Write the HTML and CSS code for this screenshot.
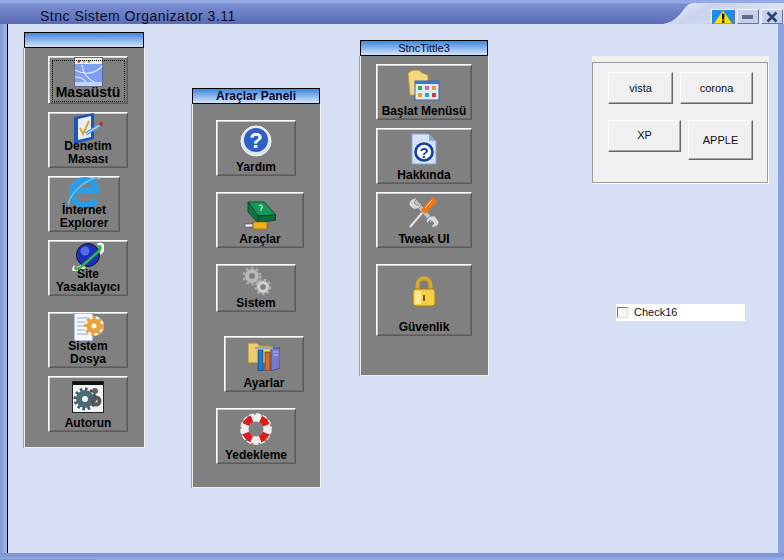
FILE: index.html
```html
<!doctype HTML>
<html>

<head>
  <title>Stnc Sistem Organizator 3.11</title>
  <link rel="stylesheet" href="styles.css">
</head>

<body>
  <div class="form">
    <div class="titlebar">
      <svg class="curve" width="124" height="24" viewBox="0 0 124 24">
        <defs>
          <linearGradient id="curveFill" x1="0" y1="0" x2="1" y2="0.3">
            <stop offset="0" stop-color="#eef1f8" />
            <stop offset="0.4" stop-color="#c9d3ec" />
            <stop offset="1" stop-color="#dbe2f3" />
          </linearGradient>
        </defs>
        <path d="M3 24C14 22 20 15 24 9C27 5 30 3 34 3H124V24Z" fill="url(#curveFill)" />
      </svg>
      <span class="title">Stnc Sistem Organizator 3.11</span>
      <div class="winbtns">
        <div class="winbtn warn">
          <svg width="20" height="14" viewBox="0 0 20 14">
            <path d="M10 0.5L19 13.5H1Z" fill="#ffe600" stroke="#c9a400" stroke-width="0.6" />
            <rect x="9" y="3.5" width="2.4" height="6" fill="#111" />
            <rect x="9" y="10.5" width="2.4" height="2.2" fill="#111" />
          </svg>
        </div>
        <div class="winbtn">
          <svg width="14" height="6" viewBox="0 0 14 6">
            <rect x="1" y="1" width="11" height="4" fill="#5f6c8e" />
          </svg>
        </div>
        <div class="winbtn">
          <svg width="12" height="12" viewBox="0 0 12 12">
            <path d="M1.5 1.5L10.5 10.5M10.5 1.5L1.5 10.5" stroke="#24466e" stroke-width="2.6" />
          </svg>
        </div>
      </div>
    </div>

    <div class="middle">
      <div class="desk">

        <section class="panel panel-one">
          <h2 class="panel-head"></h2>
          <div class="panel-body">
            <button class="tool stack w80 h48 focused">
              <svg class="ico" width="32" height="30" viewBox="0 0 32 30">
                <rect x="2.5" y="0.5" width="28" height="29" fill="#7f9ff2" stroke="#5c6a8c" />
                <rect x="3" y="1" width="27" height="6" fill="#ecebe4" />
                <circle cx="7" cy="4.5" r="1.4" fill="#d23a2c" />
                <circle cx="12" cy="4.5" r="1.4" fill="#d9a32a" />
                <circle cx="17" cy="4.5" r="1.4" fill="#5aa83a" />
                <rect x="3" y="25" width="27" height="4" fill="#c4d3f8" />
                <path d="M3 13C14 19 24 16 30 9M10 8C11 16 16 22 22 25M3 20C8 20 12 22 14 25" fill="none" stroke="#dfe8ff" stroke-width="1.2" />
              </svg>
              <span class="lbl big">Masaüstü</span>
            </button>
            <button class="tool stack w80 h56">
              <svg class="ico" width="32" height="32" viewBox="0 0 32 32">
                <path d="M2 4L22 0V26L2 31Z" fill="#1c54b8" />
                <path d="M6 6L19 3V24L6 27Z" fill="#e8eefb" />
                <path d="M8 15L11 21L17 8" fill="none" stroke="#e0a820" stroke-width="2" />
                <path d="M14 21L28 12" stroke="#5f9be0" stroke-width="3.4" />
                <path d="M14 21L28 12" stroke="#dce9fb" stroke-width="1" />
                <circle cx="29" cy="11" r="2" fill="#c8301e" />
              </svg>
              <span class="lbl">Denetim<br>Masası</span>
            </button>
            <button class="tool stack w72 h56">
              <svg class="ico" width="32" height="30" viewBox="0 0 32 30">
                <path d="M8 14H28C28 7 24 3 17 3C9 3 4 9 4 16C4 24 10 28 17 28C22 28 26 26 28 22" fill="none" stroke="#2a9de8" stroke-width="6" />
                <path d="M1 28C-1 24 8 9 24 2C28 0 31 0 31 3" fill="none" stroke="#63c3f2" stroke-width="1.6" />
              </svg>
              <span class="lbl">İnternet<br>Explorer</span>
            </button>
            <button class="tool stack w80 h56">
              <svg class="ico" width="32" height="30" viewBox="0 0 32 30">
                <path d="M4 26C1 29 4 30 9 27L29 10C32 6 30 3 26 5" fill="none" stroke="#fff" stroke-width="5" />
                <circle cx="16" cy="14" r="11.5" fill="#1f2fb8" stroke="#111" />
                <circle cx="13" cy="10" r="4.5" fill="#4f70e8" />
                <path d="M4 26C2 28 5 29 9 26L27 10C30 6 28 4 25 6" fill="none" stroke="#31b54a" stroke-width="2.6" />
              </svg>
              <span class="lbl">Site<br>Yasaklayıcı</span>
            </button>
            <button class="tool stack w80 h56 gap-8">
              <svg class="ico" width="32" height="28" viewBox="0 0 32 28">
                <path d="M2 0H21V28H2Z" fill="#f4f7fd" stroke="#6e86b8" />
                <path d="M5 5H18M5 9H16M5 13H15M5 17H15M5 21H18" stroke="#8fa8d8" />
                <circle cx="22" cy="13" r="10" fill="#fff" />
                <circle cx="22" cy="13" r="5" fill="none" stroke="#e8a23a" stroke-width="5" />
                <circle cx="22" cy="13" r="8.5" fill="none" stroke="#e8a23a" stroke-width="3" stroke-dasharray="3.2 3.2" />
                <circle cx="22" cy="13" r="2" fill="#fff6dc" />
              </svg>
              <span class="lbl">Sistem<br>Dosya</span>
            </button>
            <button class="tool w80 h56 top4">
              <svg class="ico" width="32" height="32" viewBox="0 0 32 32">
                <rect x="0.5" y="0.5" width="31" height="31" fill="#f2f4f2" stroke="#222" />
                <rect x="1" y="1" width="30" height="3" fill="#111" />
                <circle cx="13" cy="18" r="6" fill="none" stroke="#4a6a78" stroke-width="6" />
                <circle cx="13" cy="18" r="10" fill="none" stroke="#3d5a68" stroke-width="3" stroke-dasharray="2.6 2.6" />
                <circle cx="24" cy="20" r="3.5" fill="none" stroke="#555" stroke-width="4" />
                <circle cx="23" cy="10" r="3" fill="#6e5a58" />
              </svg>
              <span class="lbl">Autorun</span>
            </button>
          </div>
        </section>

        <section class="panel panel-two">
          <h2 class="panel-head">Araçlar Paneli</h2>
          <div class="panel-body">
            <button class="tool w80 h56 top4">
              <svg class="ico" width="32" height="32" viewBox="0 0 32 32">
                <circle cx="16" cy="16" r="15" fill="#dfe4ef" stroke="#fff" />
                <circle cx="16" cy="15" r="12" fill="#2f5fc4" />
                <text class="q" x="16" y="23" font-size="22">?</text>
              </svg>
              <span class="lbl">Yardım</span>
            </button>
            <button class="tool w88 h56 top8">
              <svg class="ico" width="32" height="28" viewBox="0 0 32 28">
                <path d="M4 1H20L32 14L14 15Z" fill="#149a58" stroke="#0b3a22" stroke-width="0.8" />
                <path d="M4 1L14 15V22L4 11Z" fill="#0c7a44" stroke="#0b3a22" stroke-width="0.8" />
                <path d="M14 15L32 14V19L14 22Z" fill="#0e6a3c" stroke="#0b3a22" stroke-width="0.8" />
                <path d="M15 5C17 3 20 5 17 8V10" fill="none" stroke="#a6dcbc" stroke-width="1.4" />
                <rect x="1" y="23" width="8" height="3" fill="#f2f2f2" stroke="#333" stroke-width="0.5" />
                <rect x="9" y="21" width="14" height="7" rx="1" fill="#f2b21c" stroke="#7a5500" stroke-width="0.6" />
              </svg>
              <span class="lbl">Araçlar</span>
            </button>
            <button class="tool w80 h48 top1">
              <svg class="ico" width="32" height="30" viewBox="0 0 32 30">
                <circle cx="12" cy="10" r="5" fill="none" stroke="#b8b8b8" stroke-width="4" />
                <circle cx="12" cy="10" r="8" fill="none" stroke="#a8a8a8" stroke-width="3" stroke-dasharray="2.6 2.6" />
                <circle cx="23" cy="21" r="4.5" fill="none" stroke="#d0d0d0" stroke-width="3.4" />
                <circle cx="23" cy="21" r="7" fill="none" stroke="#b0b0b0" stroke-width="2.6" stroke-dasharray="2.4 2.4" />
              </svg>
              <span class="lbl">Sistem</span>
            </button>
            <button class="tool w80 h56 gap-8 inset-8 top4">
              <svg class="ico" width="32" height="30" viewBox="0 0 32 30">
                <path d="M0 2H9L12 5H23V22H0Z" fill="#eccc72" stroke="#a8863a" />
                <rect x="10" y="9" width="5" height="21" fill="#2878c8" stroke="#123" stroke-width="0.5" />
                <rect x="17" y="11" width="5" height="19" fill="#e06a28" stroke="#123" stroke-width="0.5" />
                <path d="M23 7H32V27L23 30Z" fill="#7878cc" stroke="#3a3a78" stroke-width="0.7" />
                <path d="M25 11H30M25 14H30" stroke="#b8b8ec" />
                <path d="M7 7H25" stroke="#9aa" stroke-width="2.4" />
              </svg>
              <span class="lbl">Ayarlar</span>
            </button>
            <button class="tool w80 h56 top4">
              <svg class="ico" width="32" height="32" viewBox="0 0 32 32">
                <circle cx="16" cy="16" r="15" fill="none" stroke="#fff" stroke-width="1.4" stroke-dasharray="5 2" />
                <circle cx="16" cy="16" r="11" fill="none" stroke="#eee" stroke-width="7" />
                <circle cx="16" cy="16" r="11" fill="none" stroke="#d81e1e" stroke-width="7" stroke-dasharray="8.6 8.7" stroke-dashoffset="-4.3" />
              </svg>
              <span class="lbl">Yedekleme</span>
            </button>
          </div>
        </section>

        <section class="panel panel-three">
          <h2 class="panel-head thin">StncTittle3</h2>
          <div class="panel-body">
            <button class="tool w96 h56 top4">
              <svg class="ico" width="32" height="32" viewBox="0 0 32 32">
                <path d="M0 4C5 0 12 0 14 4L20 6V26H2Z" fill="#f2d77e" stroke="#b8963c" />
                <rect x="7" y="12" width="24" height="19" fill="#dfe8f8" stroke="#3a68a8" />
                <rect x="7" y="12" width="24" height="3" fill="#3a78d0" />
                <rect x="10" y="17" width="4" height="4" fill="#3aa84a" />
                <rect x="17" y="17" width="4" height="4" fill="#d86a9a" />
                <rect x="24" y="17" width="4" height="4" fill="#d8a03a" />
                <rect x="10" y="24" width="4" height="4" fill="#e0a020" />
                <rect x="17" y="24" width="4" height="4" fill="#28a8c0" />
                <rect x="24" y="24" width="4" height="4" fill="#d83a2a" />
              </svg>
              <span class="lbl">Başlat Menüsü</span>
            </button>
            <button class="tool w96 h56 top4">
              <svg class="ico" width="26" height="32" viewBox="0 0 26 32">
                <path d="M1 1H18L25 8V31H1Z" fill="#d4e2fa" stroke="#8aa6d8" />
                <path d="M18 1V8H25Z" fill="#7ea8ea" />
                <circle cx="13" cy="19" r="8.5" fill="#fff" stroke="#14409a" stroke-width="2.6" />
                <text class="q dark" x="13" y="24.5" font-size="15">?</text>
              </svg>
              <span class="lbl">Hakkında</span>
            </button>
            <button class="tool w96 h56 top4">
              <svg class="ico" width="32" height="32" viewBox="0 0 32 32">
                <path d="M6 3L24 24" stroke="#c4c4c4" stroke-width="4" />
                <path d="M1 8C1 3 5 1 9 1L6 6L10 9L13 5C14 10 10 13 5 12Z" fill="#d8d8d8" stroke="#666" stroke-width="0.6" />
                <path d="M31 25C31 29 27 31 23 30L26 26L22 23L19 27C17 22 21 18 27 19Z" fill="#d8d8d8" stroke="#666" stroke-width="0.6" />
                <path d="M2 30L14 16" stroke="#e4e4e4" stroke-width="2" />
                <path d="M15 15L27 2" stroke="#ef7a12" stroke-width="6" />
                <path d="M17 11L24 3" stroke="#ffc890" stroke-width="1" />
              </svg>
              <span class="lbl">Tweak UI</span>
            </button>
            <button class="tool w96 h72 gap-8 top11">
              <svg class="ico" width="24" height="31" viewBox="0 0 24 31">
                <path d="M5.5 14V9C5.5 0 18.5 0 18.5 9V14" fill="none" stroke="#d8a82a" stroke-width="4" />
                <rect x="1" y="13" width="22" height="17" rx="3" fill="#f5cf45" stroke="#a87f18" />
                <rect x="3" y="15" width="6" height="13" fill="#fbe89a" />
                <rect x="11" y="19" width="2" height="6" fill="#7a5a10" />
              </svg>
              <span class="lbl">Güvenlik</span>
            </button>
          </div>
        </section>

        <div class="side">
          <div class="group">
            <div class="frame">
              <div class="frame-row">
                <button class="plain w65 h32">vista</button>
                <button class="plain w73 h32">corona</button>
              </div>
              <div class="frame-row">
                <button class="plain w73 h32 raised">XP</button>
                <button class="plain w65 h40">APPLE</button>
              </div>
            </div>
          </div>
          <label class="check"><span class="box"></span>Check16</label>
        </div>

      </div>
    </div>

    <div class="footer"></div>
  </div>
</body>

</html>
```

FILE: styles.css
```css
*,
*::before,
*::after {
  box-sizing: border-box;
}

html {
  font-family: "Liberation Sans", Arial, sans-serif;
  font-size: 11px;
}

body {
  margin: 0;
}

.form {
  display: flex;
  flex-direction: column;
  width: 784px;
  height: 560px;
  overflow: hidden;
  background: #7f97d6;
}

.titlebar {
  position: relative;
  display: flex;
  align-items: flex-end;
  height: 24px;
  flex: none;
  background: linear-gradient(#93a9e4 0, #93a9e4 3px, #7c8ed2 4px, #5a6cb2 100%);
}

.curve {
  position: absolute;
  right: 0;
  top: 0;
}

.title {
  margin-left: 40px;
  line-height: 16px;
  font-size: 14px;
  letter-spacing: 0.5px;
  color: #0b0b2e;
}

.winbtns {
  position: relative;
  display: flex;
  gap: 2px;
  margin-left: auto;
  margin-right: 1px;
}

.winbtn {
  display: flex;
  align-items: center;
  justify-content: center;
  width: 22px;
  height: 15px;
  background: #c6d0ea;
  border-top: 1px solid #f4f6fb;
  border-left: 1px solid #f4f6fb;
  border-right: 1px solid #6d7690;
  border-bottom: 1px solid #6d7690;
}

.winbtn.warn {
  width: 24px;
  background: #1c8cf0;
}

.middle {
  display: flex;
  flex: 1;
  min-height: 0;
  padding: 0 6px 0 7px;
  background: linear-gradient(90deg, #7f97d6 0, #9db2e6 5px, #9db2e6 6px) left / 7px 100% no-repeat, #8aa3de;
}

.desk {
  display: flex;
  align-items: flex-start;
  flex: 1;
  border-left: 1px solid #000;
  background: #d6dff3;
}

.footer {
  display: flex;
  align-items: flex-end;
  height: 7px;
  flex: none;
  background: linear-gradient(#7f97d6 0, #7f97d6 3px, #96ace2 6px, #96ace2 100%);
}

.footer::after {
  content: "";
  width: 96px;
  height: 1px;
  background: #8a97b8;
}

/* panels */
.panel {
  flex: none;
}

.panel-one {
  width: 121px;
  margin: 8px 0 0 16px;
}

.panel-two {
  width: 129px;
  margin: 64px 0 0 47px;
}

.panel-three {
  width: 129px;
  margin: 16px 0 0 39px;
}

.panel-head {
  width: calc(100% - 1px);
  height: 16px;
  margin: 0;
  border: 1px solid #000;
  background: linear-gradient(#3f87e0, #d4e4f8);
  font-size: 12px;
  font-weight: bold;
  line-height: 14px;
  text-align: center;
  color: #08082a;
}

.panel-head.thin {
  font-weight: normal;
  font-size: 11px;
}

.panel-body {
  display: flex;
  flex-direction: column;
  align-items: flex-start;
  gap: 8px;
  background: #808080;
  border: 1px solid #f0f0f0;
  border-top: 0;
  box-shadow: -1px 0 0 #9a9fb0;
}

.panel-one .panel-body {
  padding: 8px 0 15px 23px;
}

.panel-two .panel-body {
  padding: 16px 0 23px 23px;
  gap: 16px;
}

.panel-three .panel-body {
  padding: 8px 0 39px 15px;
}

/* big picture buttons */
.tool {
  position: relative;
  display: flex;
  flex-direction: column;
  align-items: center;
  padding: 0 0 1px;
  background: #808080;
  border: 1px solid;
  border-color: #fff #5a5a5a #5a5a5a #fff;
  box-shadow: inset 1px 1px 0 #cfcfcf, inset -1px -1px 0 #6c6c6c;
  font-family: inherit;
  color: #000;
}

.focused::after {
  content: "";
  position: absolute;
  left: 3px;
  right: 2px;
  top: 3px;
  bottom: 1px;
  border: 1px dotted #000;
}

.ico {
  display: block;
  flex: none;
}

/* two line labels run up over the icon */
.stack .ico {
  margin-bottom: -12px;
}

.top1 { padding-top: 1px; }
.top4 { padding-top: 4px; }
.top8 { padding-top: 8px; }
.top11 { padding-top: 11px; }

.w72 { width: 72px; }
.w80 { width: 80px; }
.w88 { width: 88px; }
.w96 { width: 96px; }
.w65 { width: 65px; }
.w73 { width: 73px; }
.h32 { height: 32px; }
.h40 { height: 40px; }
.h48 { height: 48px; }
.h56 { height: 56px; }
.h72 { height: 72px; }

.gap-8 { margin-top: 8px; }
.inset-8 { margin-left: 8px; }

.lbl {
  position: relative;
  margin-top: auto;
  font-size: 12px;
  font-weight: bold;
  line-height: 13px;
  text-align: center;
}

.lbl.big {
  margin-bottom: 2px;
  font-size: 14px;
  line-height: 15px;
}

.q {
  font-family: "Liberation Sans", sans-serif;
  font-weight: bold;
  text-anchor: middle;
  fill: #fff;
}

.q.dark {
  fill: #14409a;
}

/* plain grey panel on the right */
.side {
  flex: none;
  margin: 32px 0 0 103px;
  width: 177px;
}

.group {
  height: 128px;
  padding-top: 6px;
  background: #f0f0f0;
}

.frame {
  display: flex;
  flex-direction: column;
  gap: 16px;
  width: 176px;
  height: 121px;
  padding: 9px 0 0 15px;
  border: 1px solid #9a9a9a;
  box-shadow: 1px 1px 0 #fff;
}

.frame-row {
  display: flex;
  align-items: flex-start;
  gap: 7px;
}

.plain {
  padding: 0;
  background: #f0f0f0;
  border: 1px solid;
  border-color: #fff #666 #666 #fff;
  box-shadow: inset -1px -1px 0 #a8a8a8;
  font-family: inherit;
  font-size: 11px;
  color: #111;
}

.plain.raised {
  padding-bottom: 2px;
}

.check {
  display: flex;
  align-items: center;
  gap: 6px;
  width: 129px;
  height: 17px;
  margin: 120px 0 0 24px;
  padding: 0 0 1px 1px;
  background: #fff;
  font-size: 11px;
  color: #111;
}

.box {
  width: 11px;
  height: 11px;
  background: #f6f6f6;
  border: 1px solid;
  border-color: #777 #ddd #ddd #777;
}
```
